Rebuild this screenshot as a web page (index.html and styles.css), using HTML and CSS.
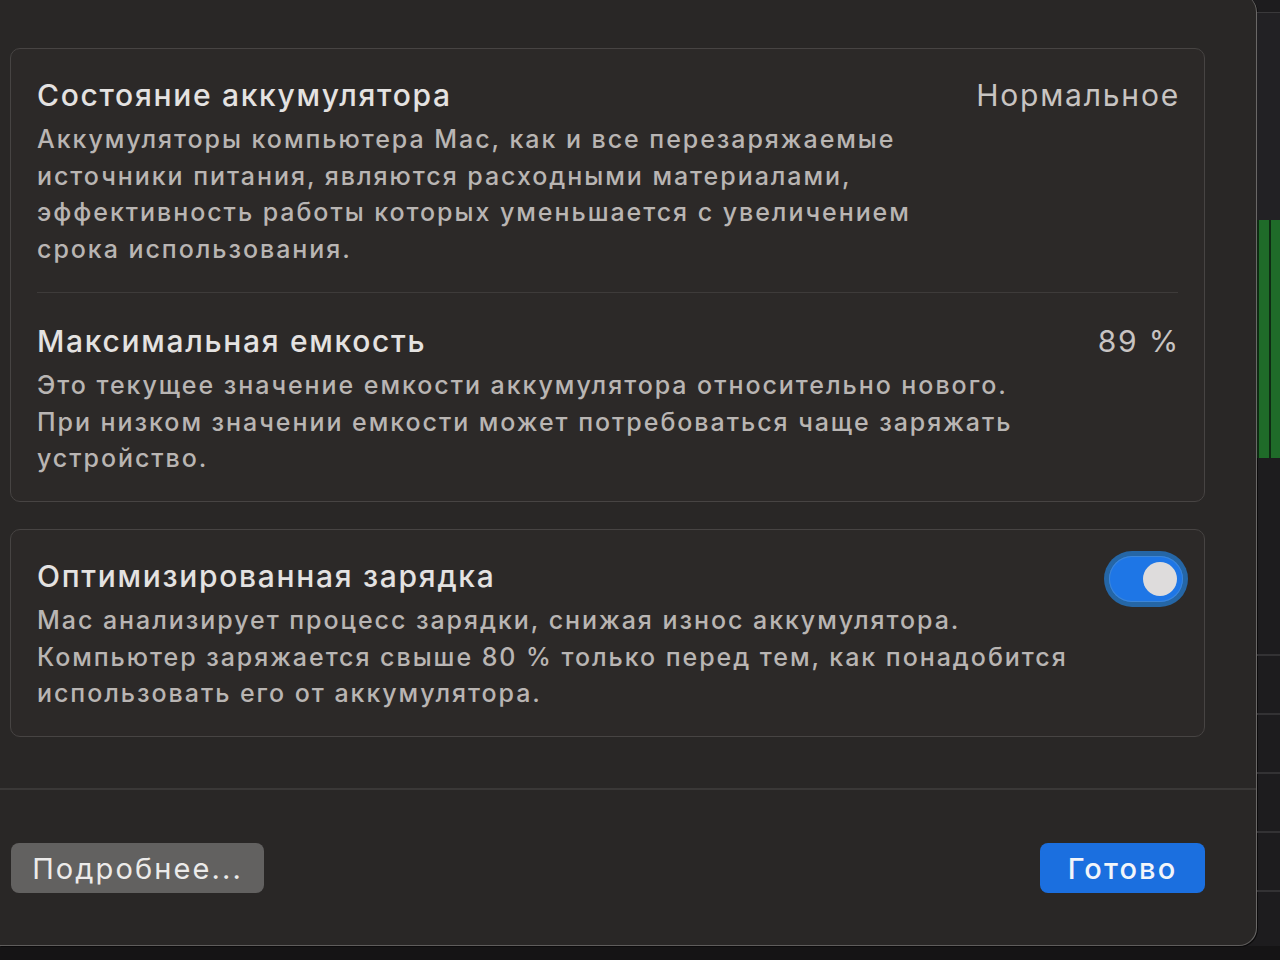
FILE: index.html
```html
<!DOCTYPE html>
<html lang="ru">
  <head>
    <meta charset="UTF-8" />
    <meta name="viewport" content="width=device-width, initial-scale=1.0" />
    <title>Аккумулятор</title>
    <link rel="stylesheet" href="styles.css">
  </head>
  <body>
    <div class="screen">
      <div class="dialog">
        <div class="dialog-body">
          <div class="card">
            <div class="row">
              <div class="row-head">
                <h3>Состояние аккумулятора</h3>
                <span class="value">Нормальное</span>
              </div>
              <p>Аккумуляторы компьютера Mac, как и все перезаряжаемые<br>
                источники питания, являются расходными материалами,<br>
                эффективность работы которых уменьшается с увеличением<br>
                срока использования.</p>
            </div>
            <div class="row">
              <div class="row-head">
                <h3>Максимальная емкость</h3>
                <span class="value">89 %</span>
              </div>
              <p>Это текущее значение емкости аккумулятора относительно нового.<br>
                При низком значении емкости может потребоваться чаще заряжать<br>
                устройство.</p>
            </div>
          </div>
          <div class="card">
            <div class="row">
              <div class="row-head">
                <h3>Оптимизированная зарядка</h3>
                <span class="switch"><span class="knob"></span></span>
              </div>
              <p>Mac анализирует процесс зарядки, снижая износ аккумулятора.<br>
                Компьютер заряжается свыше 80 % только перед тем, как понадобится<br>
                использовать его от аккумулятора.</p>
            </div>
          </div>
        </div>
        <div class="dialog-footer">
          <button class="btn">Подробнее...</button>
          <button class="btn primary">Готово</button>
        </div>
      </div>
      <div class="side">
        <div class="side-top"></div>
        <div class="side-bars">
          <span></span>
          <span></span>
        </div>
        <div class="side-rows">
          <span></span><span></span><span></span><span></span><span></span>
        </div>
      </div>
    </div>
    <div class="dock"></div>
  </body>
</html>
```
FILE: styles.css
```css
* {
  box-sizing: border-box;
}
html,
body {
  margin: 0;
  height: 100%;
  overflow: hidden;
}
body {
  background-color: #151415;
  font-family: Inter, "Liberation Sans", sans-serif;
}
.screen {
  display: flex;
  height: 946px;
  background-color: #1d1c1e;
}
.dialog {
  width: 1257px;
  height: 952px;
  margin-top: -6px;
  display: flex;
  flex-direction: column;
  background-color: #292726;
  border-right: 1px solid #6a6867;
  border-bottom: 1px solid #5f5d5c;
  border-radius: 0 18px 18px 0;
  box-shadow: 1px 1px 0 #0c0b0c;
}
.dialog-body {
  padding: 54px 51px 0 10px;
  display: flex;
  flex-direction: column;
  gap: 27px;
  height: 796px;
  border-bottom: 2px solid #3a3837;
}
.card {
  background-color: #2c2928;
  border: 1px solid #474443;
  border-radius: 10px;
  padding: 0 26px;
}
.row {
  padding: 27px 0 24px;
}
.row + .row {
  border-top: 1px solid #3e3b3a;
  padding-top: 29px;
}
.row-head {
  display: flex;
  justify-content: space-between;
  align-items: center;
  height: 38px;
}
h3 {
  margin: 0;
  font-size: 30px;
  font-weight: 500;
  letter-spacing: 1.7px;
  color: #e4e2e1;
}
.value {
  font-size: 30px;
  letter-spacing: 1.8px;
  margin-right: -2px;
  color: #c8c4c2;
}
p {
  margin: 7px 0 0;
  font-size: 25px;
  font-weight: 500;
  letter-spacing: 1.95px;
  line-height: 36.7px;
  color: #b9b5b3;
}
.switch {
  position: relative;
  width: 74px;
  height: 46px;
  margin: 6px -5px 0 0;
  border-radius: 23px;
  background-color: #1e76e6;
  box-shadow: 0 0 0 1px #3d86d8 inset, 0 0 0 5px #2566a6;
}
.knob {
  position: absolute;
  top: 6px;
  right: 6px;
  width: 34px;
  height: 34px;
  border-radius: 50%;
  background-color: #dedcdc;
}
.dialog-footer {
  display: flex;
  justify-content: space-between;
  padding: 53px 51px 0 11px;
}
.btn {
  width: 253px;
  height: 50px;
  border: none;
  border-radius: 8px;
  padding: 0;
  font-family: Inter, "Liberation Sans", sans-serif;
  font-size: 29px;
  letter-spacing: 2.1px;
  color: #ecebea;
  background-color: #626160;
}
.btn.primary {
  width: 165px;
  font-weight: 500;
  color: #f2f5fa;
  background-color: #1b6fdf;
}
.side {
  flex: 1;
  display: flex;
  flex-direction: column;
}
.side-top {
  height: 208px;
  background-color: #222124;
  border-top: 1px solid #3a393b;
  margin-top: 12px;
}
.side-bars {
  height: 238px;
  display: flex;
  gap: 2px;
  padding-left: 2px;
  background-color: #0f2a13;
}
.side-bars span {
  flex: 1;
  background-color: #1f6b29;
}
.side-rows {
  flex: 1;
  display: flex;
  flex-direction: column;
  padding-top: 196px;
  gap: 57px;
}
.side-rows span {
  height: 2px;
  background-color: #333234;
}
.dock {
  height: 14px;
  background-color: #151415;
}
```
